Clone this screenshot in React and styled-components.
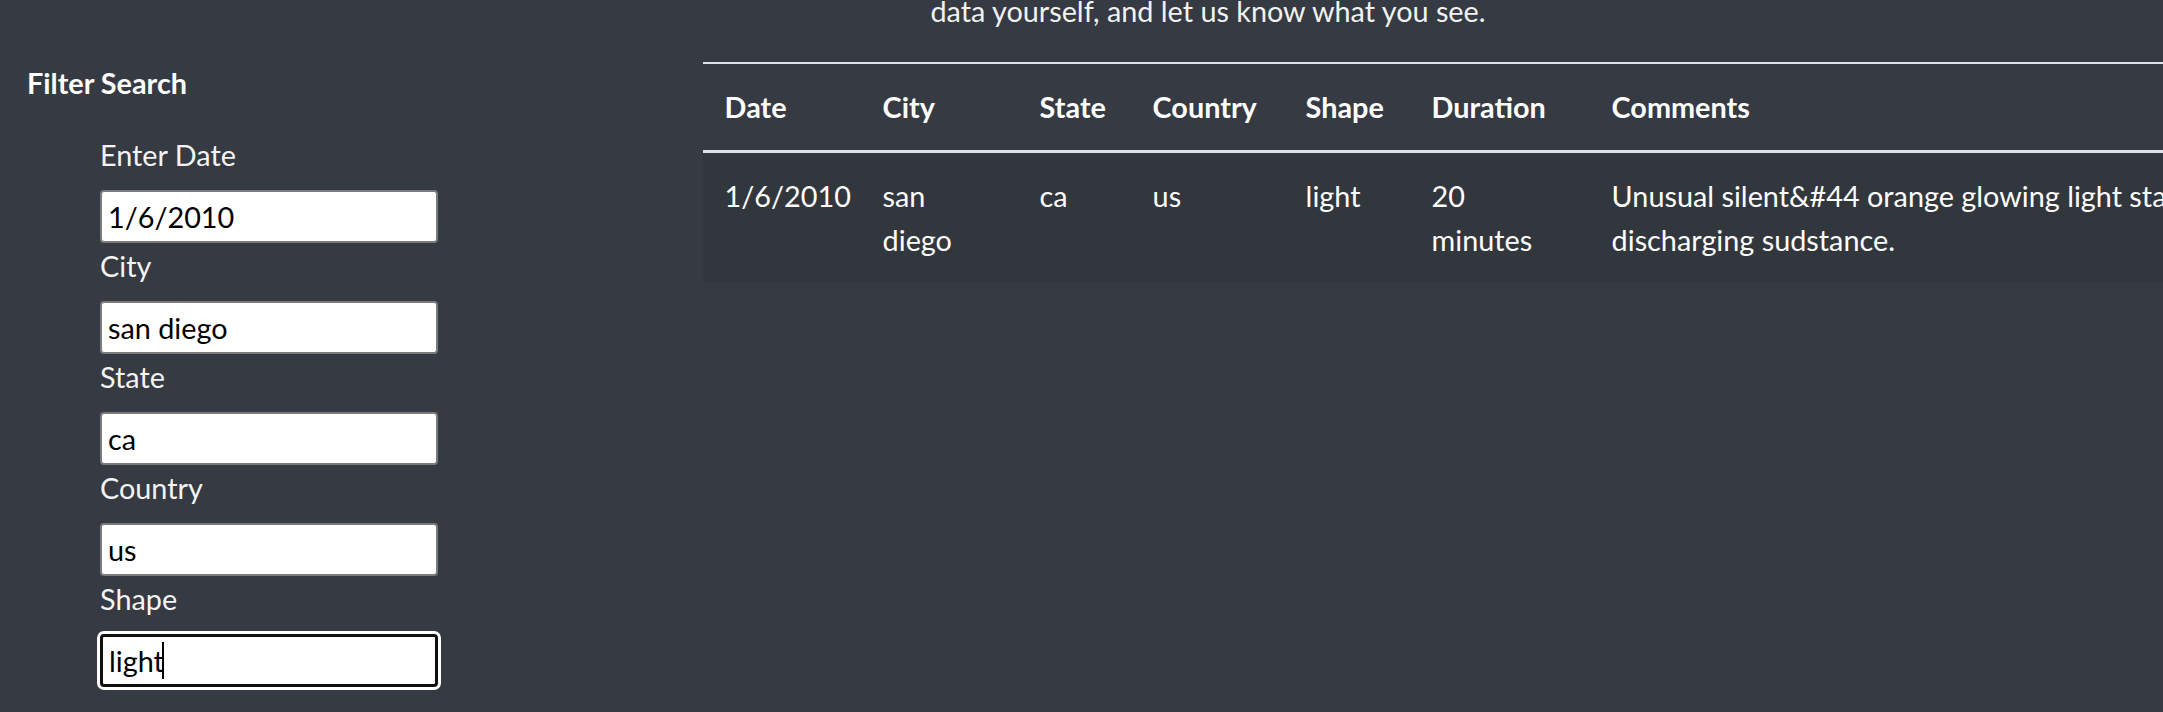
import React from "react";
import styled, { createGlobalStyle } from "styled-components";

const Global = createGlobalStyle`
  html, body {
    margin: 0;
    padding: 0;
    overflow: hidden;
    background: #363a42;
  }
  body {
    font-family: Lato, "Open Sans", sans-serif;
    font-size: 28.8px;
    line-height: 1.5;
    color: #ffffff;
  }
  * { box-sizing: border-box; }
`;

const Page = styled.div`
  display: flex;
  align-items: flex-start;
  width: 2163px;
  height: 712px;
`;

const Sidebar = styled.aside`
  flex: 0 0 676px;
  padding: 61.5px 27px 0 27px;
`;

const SideTitle = styled.h6`
  margin: 0 0 27.3px 0;
  font-size: 28.8px;
  font-weight: 700;
  line-height: 43.2px;
  color: #ffffff;
`;

const FilterList = styled.ul`
  list-style: none;
  margin: 0;
  padding: 0 0 0 73px;
`;

const Field = styled.li`
  display: flex;
  flex-direction: column;
  align-items: flex-start;
`;

const Label = styled.label`
  display: block;
  line-height: 43.2px;
  padding-top: 2px;
  margin-bottom: 13px;
  color: #f4f4f4;
`;

const InputWrap = styled.div`
  position: relative;
  width: 338px;
  height: 52.8px;
`;

const TextInput = styled.input`
  display: block;
  width: 338px;
  height: 52.8px;
  margin: 0;
  padding: 0 6px;
  font-family: Lato, "Open Sans", sans-serif;
  font-size: 28.8px;
  color: #000;
  background: #fff;
  border: ${(p) => (p.$focused ? "3px solid #101010" : "2px solid #7b7b7b")};
  border-radius: 4px;
  outline: none;
  box-shadow: ${(p) => (p.$focused ? "0 0 0 3px #ffffff" : "none")};
  caret-color: transparent;
`;

const CaretLayer = styled.div`
  position: absolute;
  inset: 0;
  padding: 0 7px;
  display: flex;
  align-items: center;
  pointer-events: none;
  font-size: 28.8px;
`;

const Ghost = styled.span`
  color: transparent;
`;

const Caret = styled.span`
  display: inline-block;
  width: 2px;
  height: 37px;
  background: #000;
`;

const Main = styled.main`
  flex: 1 1 auto;
  min-width: 0;
  padding-left: 27px;
  overflow: hidden;
`;

const Intro = styled.p`
  width: 1010px;
  margin: -10.5px 0 28.8px 0;
  text-align: center;
  line-height: 43.2px;
  color: #f2f2f2;
`;

const Table = styled.table`
  width: 1990px;
  table-layout: fixed;
  border-collapse: collapse;
  color: #fff;
`;

const Th = styled.th`
  width: ${(p) => p.$w};
  padding: 22.6px 21.6px 20.6px;
  text-align: left;
  vertical-align: bottom;
  font-weight: 700;
  line-height: 43.2px;
  border-top: 2px solid #dee2e6;
  border-bottom: 3.6px solid #dee2e6;
`;

const BodyRow = styled.tr`
  background: #32363d;
`;

const Td = styled.td`
  padding: 22.6px 21.6px 20.6px;
  vertical-align: top;
  line-height: 43.2px;
`;

const columns = [
  { key: "datetime", label: "Date", w: "158px" },
  { key: "city", label: "City", w: "157px" },
  { key: "state", label: "State", w: "113px" },
  { key: "country", label: "Country", w: "153px" },
  { key: "shape", label: "Shape", w: "126px" },
  { key: "duration", label: "Duration", w: "180px" },
  { key: "comments", label: "Comments", w: "auto" },
];

const rows = [
  {
    datetime: "1/6/2010",
    city: "san diego",
    state: "ca",
    country: "us",
    shape: "light",
    duration: "20 minutes",
    comments:
      "Unusual silent&#44 orange glowing light stationary&#44 then appeared to be discharging sudstance.",
  },
];

const filters = [
  { id: "datetime", label: "Enter Date", value: "1/6/2010" },
  { id: "city", label: "City", value: "san diego" },
  { id: "state", label: "State", value: "ca" },
  { id: "country", label: "Country", value: "us" },
  { id: "shape", label: "Shape", value: "light", focused: true },
];

export default function App() {
  return (
    <>
      <Global />
      <Page>
        <Sidebar>
          <SideTitle>Filter Search</SideTitle>
          <FilterList>
            {filters.map((f) => (
              <Field key={f.id}>
                <Label htmlFor={f.id}>{f.label}</Label>
                <InputWrap>
                  <TextInput
                    id={f.id}
                    type="text"
                    defaultValue={f.value}
                    $focused={f.focused}
                  />
                  {f.focused && (
                    <CaretLayer aria-hidden="true">
                      <Ghost>{f.value}</Ghost>
                      <Caret />
                    </CaretLayer>
                  )}
                </InputWrap>
              </Field>
            ))}
          </FilterList>
        </Sidebar>
        <Main>
          <Intro>data yourself, and let us know what you see.</Intro>
          <Table>
            <thead>
              <tr>
                {columns.map((c) => (
                  <Th key={c.key} $w={c.w}>
                    {c.label}
                  </Th>
                ))}
              </tr>
            </thead>
            <tbody>
              {rows.map((r, i) => (
                <BodyRow key={i}>
                  {columns.map((c) => (
                    <Td key={c.key}>{r[c.key]}</Td>
                  ))}
                </BodyRow>
              ))}
            </tbody>
          </Table>
        </Main>
      </Page>
    </>
  );
}
